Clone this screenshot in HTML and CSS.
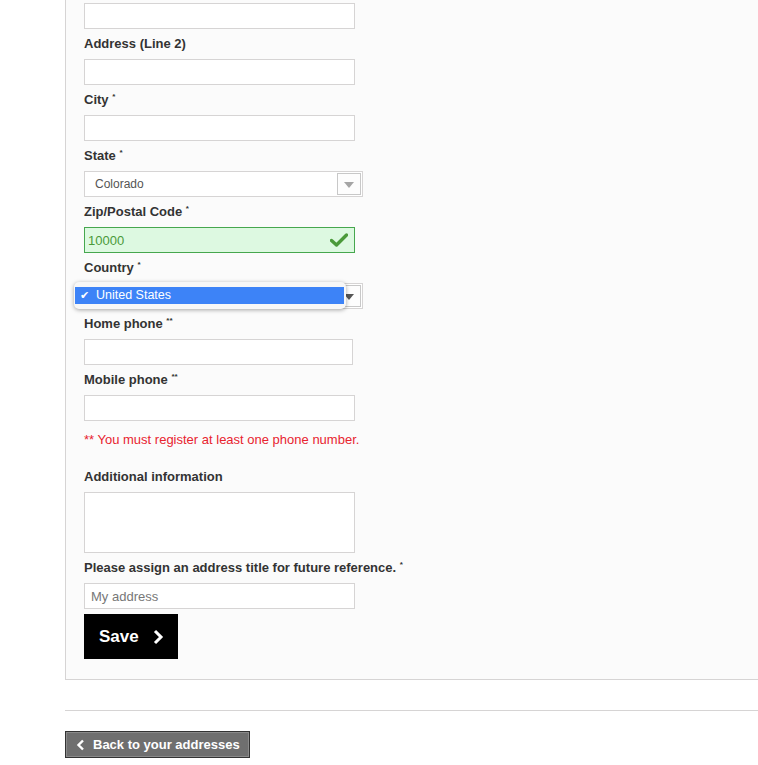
FILE: index.html
```html
<!DOCTYPE html>
<html>

<head>
    <title>Your addresses</title>
    <link rel="stylesheet" href="styles.css">
</head>

<body>
    <div class="page">
        <div class="box">
            <form class="address-form">
                <input type="text" class="field" />

                <label class="field-label">Address (Line 2)</label>
                <input type="text" class="field" />

                <label class="field-label">City <sup>*</sup></label>
                <input type="text" class="field" />

                <label class="field-label">State <sup>*</sup></label>
                <div class="select-box">
                    <span class="select-value">Colorado</span>
                    <span class="select-arrow"></span>
                </div>

                <label class="field-label">Zip/Postal Code <sup>*</sup></label>
                <div class="field field-ok">
                    <span>10000</span>
                    <svg class="ok-icon" width="18" height="14" viewBox="0 0 18 14">
                        <path d="M1.5 7.5 L6.5 12 L16.5 2" fill="none" stroke="#4a9a3a" stroke-width="3.4" stroke-linecap="round" stroke-linejoin="round" />
                    </svg>
                </div>

                <label class="field-label">Country <sup>*</sup></label>
                <div class="select-box select-open">
                    <span class="select-arrow"></span>
                    <div class="select-menu">
                        <div class="select-option"><span class="tick">&#10004;</span>United States</div>
                    </div>
                </div>

                <label class="field-label">Home phone <sup>**</sup></label>
                <input type="text" class="field field-short" />

                <label class="field-label">Mobile phone <sup>**</sup></label>
                <input type="text" class="field" />

                <p class="phone-note">** You must register at least one phone number.</p>

                <label class="field-label">Additional information</label>
                <textarea class="field field-text"></textarea>

                <label class="field-label">Please assign an address title for future reference. <sup>*</sup></label>
                <input type="text" class="field" placeholder="My address" />

                <button type="button" class="save-button">
                    Save
                    <svg width="12" height="16" viewBox="0 0 12 16">
                        <path d="M3 2 L9 8 L3 14" fill="none" stroke="#fff" stroke-width="3" />
                    </svg>
                </button>
            </form>
        </div>

        <div class="footer-links">
            <a class="back-button" href="#">
                <svg width="10" height="12" viewBox="0 0 10 12">
                    <path d="M7 1.5 L2.5 6 L7 10.5" fill="none" stroke="#fff" stroke-width="2.4" />
                </svg>
                Back to your addresses
            </a>
        </div>
    </div>
</body>

</html>
```

FILE: styles.css
```css
html,
body {
    margin: 0;
    padding: 0;
    background-color: white;
    overflow: hidden;
}

body {
    font-family: "Liberation Sans", Arial, sans-serif;
    font-size: 13px;
    color: #333;
}

.page {
    padding-left: 65px;
}

.box {
    width: 720px;
    background-color: #fbfbfb;
    border: 1px solid #d6d4d4;
    border-top: 0;
    padding: 3px 18px 20px 18px;
}

.address-form {
    display: flex;
    flex-direction: column;
    align-items: flex-start;
}

.field-label {
    display: block;
    font-weight: bold;
    line-height: 18px;
    padding: 6px 0 6px 0;
}

.field-label sup {
    font-size: 8px;
    vertical-align: top;
    position: relative;
    top: -3px;
}

.field {
    box-sizing: border-box;
    width: 271px;
    height: 26px;
    margin: 0;
    border: 1px solid #d6d4d4;
    background-color: white;
    padding: 0 6px;
    font-family: "Liberation Sans", Arial, sans-serif;
    font-size: 13px;
    color: #555;
}

.field::placeholder {
    color: #777;
}

.field-short {
    width: 269px;
}

.field-text {
    height: 61px;
    resize: none;
}

.field-ok {
    display: flex;
    align-items: center;
    justify-content: space-between;
    background-color: #ddf9e1;
    border-color: #46a74e;
    color: #4a9a3a;
    padding-left: 3px;
    padding-right: 6px;
}

.select-box {
    position: relative;
    box-sizing: border-box;
    width: 279px;
    height: 26px;
    border: 1px solid #d6d4d4;
    background-color: white;
    display: flex;
    align-items: center;
    font-size: 12px;
    color: #555;
    padding-left: 10px;
}

.select-arrow {
    position: absolute;
    right: 1px;
    top: 1px;
    box-sizing: border-box;
    width: 24px;
    height: 22px;
    border: 1px solid #c8c8c8;
    background-color: #fdfdfd;
}

.select-arrow::after {
    content: "";
    position: absolute;
    left: 6px;
    top: 8px;
    border-left: 5px solid transparent;
    border-right: 5px solid transparent;
    border-top: 6px solid #a5a5a5;
}

.select-open .select-arrow::after {
    border-top-color: #555;
}

.select-menu {
    position: absolute;
    left: -11px;
    top: -2px;
    box-sizing: border-box;
    width: 272px;
    height: 27px;
    background-color: #f7f7f7;
    border-radius: 5px;
    box-shadow: 0 1px 4px rgba(0, 0, 0, 0.35);
    padding: 5px 2px 0 1px;
}

.select-option {
    height: 17px;
    line-height: 17px;
    background-color: #3d83f7;
    color: white;
    font-size: 12.5px;
    padding-left: 5px;
}

.tick {
    display: inline-block;
    width: 16px;
    font-size: 11px;
}

.phone-note {
    margin: 0;
    color: #e8232f;
    line-height: 18px;
    padding: 10px 0 13px 0;
}

.save-button {
    margin-top: 5px;
    width: 94px;
    height: 45px;
    border: 0;
    background-color: black;
    color: white;
    font-family: "Liberation Sans", Arial, sans-serif;
    font-size: 17px;
    font-weight: bold;
    display: flex;
    align-items: center;
    padding: 0 0 0 15px;
    gap: 13px;
}

.footer-links {
    border-top: 1px solid #d6d4d4;
    margin-top: 30px;
    padding-top: 20px;
}

.back-button {
    display: inline-flex;
    align-items: center;
    gap: 7px;
    box-sizing: border-box;
    height: 27px;
    width: 185px;
    padding-left: 10px;
    background-color: #6f6f6f;
    border: 1px solid #333;
    box-shadow: inset 0 0 0 1px #8a8a8a;
    color: white;
    font-weight: bold;
    text-decoration: none;
}
```
